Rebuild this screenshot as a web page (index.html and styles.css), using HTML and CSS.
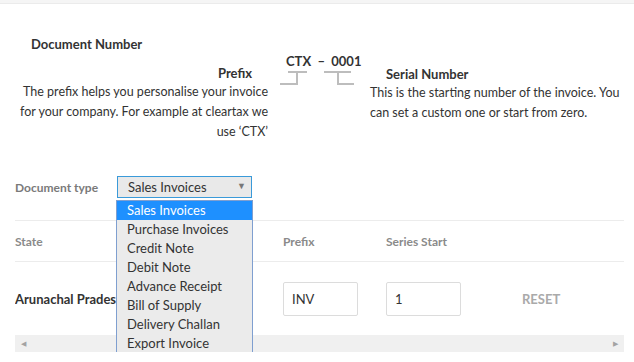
FILE: index.html
```html
<!DOCTYPE html>
<html lang="en">
<head>
    <meta charset="UTF-8">
    <title>Document Number</title>
    <link rel="stylesheet" href="styles.css">
</head>
<body>
    <div class="topbar"></div>

    <div class="doc-number">
        <h3>Document Number</h3>
        <div class="number-row">
            <div class="col-left">
                <h4>Prefix</h4>
                <p>The prefix helps you personalise your invoice for your company. For example at cleartax we use ‘CTX’</p>
            </div>
            <div class="col-mid">
                <div class="sample">CTX &nbsp;–&nbsp; 0001</div>
                <svg class="brackets" width="102" height="16" viewBox="0 0 102 16">
                    <path d="M20 1 H39 M29 1 V13 H12 M56 1 H83 M70 1 V13 H86" fill="none" stroke="#bdbdbd" stroke-width="2"/>
                </svg>
            </div>
            <div class="col-right">
                <h4>Serial Number</h4>
                <p>This is the starting number of the invoice. You can set a custom one or start from zero.</p>
            </div>
        </div>
    </div>

    <div class="doc-type">
        <label>Document type</label>
        <div class="select-wrap">
            <div class="select">Sales Invoices <span class="arrow">▼</span></div>
            <ul class="options">
                <li class="active">Sales Invoices</li>
                <li>Purchase Invoices</li>
                <li>Credit Note</li>
                <li>Debit Note</li>
                <li>Advance Receipt</li>
                <li>Bill of Supply</li>
                <li>Delivery Challan</li>
                <li>Export Invoice</li>
            </ul>
        </div>
    </div>

    <div class="series-table">
        <div class="row head">
            <div class="c-state">State</div>
            <div class="c-prefix">Prefix</div>
            <div class="c-start">Series Start</div>
        </div>
        <div class="row body">
            <div class="c-state state-name">Arunachal Pradesh</div>
            <div class="c-prefix"><input type="text" value="INV"></div>
            <div class="c-start"><input type="text" value="1"></div>
            <div class="c-reset">RESET</div>
        </div>
        <div class="scrollbar">
            <span class="left">◀</span>
            <span class="right">▶</span>
        </div>
    </div>
</body>
</html>
```

FILE: styles.css
```css
* {
    margin: 0;
    padding: 0;
    box-sizing: border-box;
}

body {
    font-family: 'Lato', 'Liberation Sans', sans-serif;
    font-size: 13px;
    color: #333;
    background: #fff;
    width: 634px;
    overflow: hidden;
}

.topbar {
    height: 4px;
    background: #f5f5f5;
    border-bottom: 1px solid #ebebeb;
}

.doc-number {
    padding-top: 31px;
}

.doc-number h3 {
    font-size: 13px;
    font-weight: bold;
    line-height: 18px;
    padding-left: 31px;
    color: #333;
}

.number-row {
    display: flex;
}

.col-left {
    width: 268px;
    padding-left: 6px;
    padding-top: 11px;
    text-align: right;
}

.col-left h4 {
    font-size: 13px;
    font-weight: bold;
    line-height: 18px;
    padding-right: 16px;
}

.col-left p,
.col-right p {
    line-height: 20px;
    font-size: 12.5px;
}

.col-mid {
    width: 102px;
}

.sample {
    font-weight: bold;
    font-size: 13px;
    line-height: 16px;
    padding-left: 18px;
}

.brackets {
    display: block;
    margin-top: 2px;
}

.col-right {
    width: 260px;
    padding-top: 12px;
}

.col-right h4 {
    font-size: 13px;
    font-weight: bold;
    line-height: 18px;
    padding-left: 16px;
}

.doc-type {
    display: flex;
    align-items: center;
    margin-top: 34px;
    padding-left: 15px;
}

.doc-type label {
    width: 102px;
    font-size: 12px;
    font-weight: bold;
    color: #7a7a7a;
}

.select-wrap {
    position: relative;
}

.select {
    width: 135px;
    height: 22px;
    border: 1px solid #3a9ad9;
    background: #e9e9e9;
    padding-left: 10px;
    line-height: 20px;
    font-size: 13px;
    color: #333;
}

.arrow {
    position: absolute;
    right: 6px;
    top: 0;
    font-size: 9px;
    color: #777;
}

.options {
    position: absolute;
    left: -1px;
    top: 24px;
    width: 137px;
    list-style: none;
    background: #ebebeb;
    border: 1px solid #7f9fd0;
    z-index: 5;
}

.options li {
    height: 19px;
    line-height: 19px;
    padding-left: 10px;
    font-size: 13px;
    color: #333;
}

.options li.active {
    background: #1e90ff;
    color: #fff;
}

.series-table {
    margin: 22px 10px 0 15px;
}

.row {
    display: flex;
    align-items: center;
    border-top: 1px solid #ececec;
}

.row.head {
    height: 41px;
    font-size: 12px;
    font-weight: bold;
    color: #8a8a8a;
}

.row.body {
    height: 74px;
}

.c-state {
    width: 268px;
    white-space: nowrap;
    overflow: hidden;
}

.state-name {
    font-weight: bold;
    color: #333;
}

.c-prefix {
    width: 103px;
}

.c-start {
    width: 136px;
}

input {
    width: 75px;
    height: 34px;
    border: 1px solid #dcdcdc;
    border-radius: 2px;
    padding-left: 8px;
    font-family: inherit;
    font-size: 13px;
    color: #333;
}

.c-reset {
    font-weight: bold;
    color: #aaa;
}

.scrollbar {
    display: flex;
    justify-content: space-between;
    align-items: center;
    height: 17px;
    background: #f0f0f0;
    padding: 0 6px;
    font-size: 7px;
    color: #a3a3a3;
}
```
